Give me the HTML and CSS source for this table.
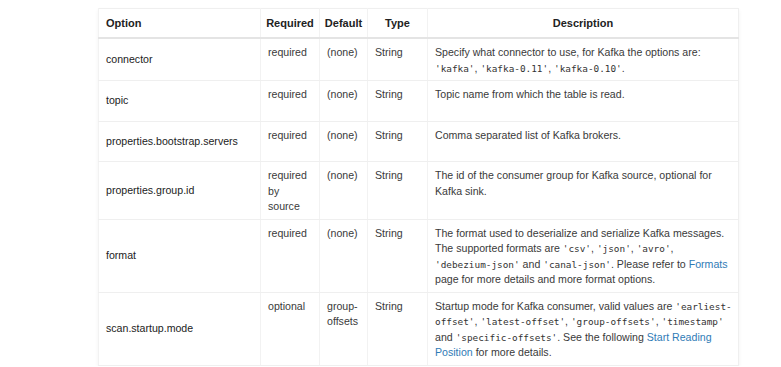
FILE: index.html
```html
<!DOCTYPE html>
<html lang="en">
<head>
  <meta charset="UTF-8">
  <meta name="viewport" content="width=device-width, initial-scale=1.0">
  <title>Kafka Connector Options</title>
  <link rel="stylesheet" href="styles.css">
</head>
<body>
  <table class="options-table">
    <colgroup>
      <col class="col-option">
      <col class="col-required">
      <col class="col-default">
      <col class="col-type">
      <col class="col-desc">
    </colgroup>
    <thead>
      <tr>
        <th class="th-left">Option</th>
        <th>Required</th>
        <th>Default</th>
        <th>Type</th>
        <th>Description</th>
      </tr>
    </thead>
    <tbody>
      <tr>
        <td class="opt">connector</td>
        <td class="req">required</td>
        <td>(none)</td>
        <td>String</td>
        <td class="desc">Specify what connector to use, for Kafka the options are: <code>'kafka'</code>, <code>'kafka-0.11'</code>, <code>'kafka-0.10'</code>.</td>
      </tr>
      <tr>
        <td class="opt">topic</td>
        <td class="req">required</td>
        <td>(none)</td>
        <td>String</td>
        <td class="desc">Topic name from which the table is read.</td>
      </tr>
      <tr>
        <td class="opt">properties.bootstrap.servers</td>
        <td class="req">required</td>
        <td>(none)</td>
        <td>String</td>
        <td class="desc">Comma separated list of Kafka brokers.</td>
      </tr>
      <tr>
        <td class="opt">properties.group.id</td>
        <td class="req">required by source</td>
        <td>(none)</td>
        <td>String</td>
        <td class="desc">The id of the consumer group for Kafka source, optional for Kafka sink.</td>
      </tr>
      <tr>
        <td class="opt">format</td>
        <td class="req">required</td>
        <td>(none)</td>
        <td>String</td>
        <td class="desc">The format used to deserialize and serialize Kafka messages. The supported formats are <code>'csv'</code>, <code>'json'</code>, <code>'avro'</code>, <code class="nowrap">'debezium-json'</code> and <code>'canal-json'</code>. Please refer to <a href="#">Formats</a> page for more details and more format options.</td>
      </tr>
      <tr>
        <td class="opt">scan.startup.mode</td>
        <td class="req">optional</td>
        <td>group-offsets</td>
        <td>String</td>
        <td class="desc">Startup mode for Kafka consumer, valid values are <code>'earliest-offset'</code>, <code>'latest-offset'</code>, <code>'group-offsets'</code>, <code>'timestamp'</code> and <code>'specific-offsets'</code>. See the following <a href="#">Start Reading Position</a> for more details.</td>
      </tr>
    </tbody>
  </table>
</body>
</html>
```

FILE: styles.css
```css
body {
  margin: 0;
  background: #ffffff;
  font-family: "Liberation Sans", Arial, sans-serif;
  font-size: 10.6px;
  color: #3a3a3a;
}
.options-table {
  margin: 8px 0 0 98px;
  width: 640px;
  table-layout: fixed;
  border-collapse: collapse;
  border: 1px solid #efefef;
  box-shadow: 0 2px 4px rgba(0, 0, 0, 0.05);
}
.col-option { width: 162px; }
.col-required { width: 59px; }
.col-default { width: 48px; }
.col-type { width: 60px; }
.col-desc { width: 311px; }
th {
  height: 28px;
  padding: 0 4px;
  font-size: 11px;
  font-weight: bold;
  color: #222;
  text-align: center;
  border-left: 1px solid #f2f2f2;
  border-bottom: 2px solid #e4e4e4;
}
th.th-left {
  text-align: left;
  padding-left: 7px;
}
td {
  padding: 6px 4px 4px 7px;
  line-height: 15.5px;
  vertical-align: top;
  border-left: 1px solid #f2f2f2;
  border-bottom: 1px solid #efefef;
  word-wrap: break-word;
}
td.opt {
  padding: 12px 7px;
  vertical-align: middle;
  color: #222;
}
td.req {
  padding-right: 8px;
}
td.desc {
  padding-right: 5px;
}
code {
  font-family: "DejaVu Sans Mono", "Liberation Mono", monospace;
  font-size: 9.4px;
  line-height: 1;
  color: #333;
}
code.nowrap {
  white-space: nowrap;
}
a {
  color: #2f7bb6;
  text-decoration: none;
}
```
